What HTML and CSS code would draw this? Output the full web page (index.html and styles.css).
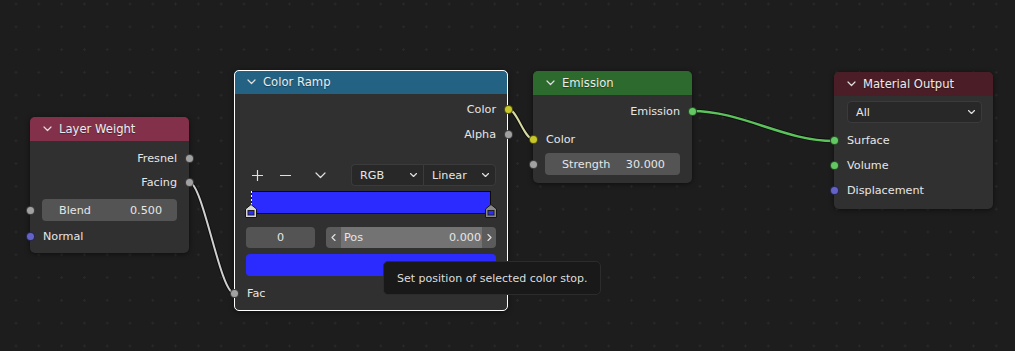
FILE: index.html
```html
<!DOCTYPE html>
<html>
<head>
<meta charset="utf-8">
<link rel="stylesheet" href="styles.css">
</head>
<body>
<div class="canvas">
  <svg class="wires" width="1015" height="351" viewBox="0 0 1015 351">
    <g fill="none" stroke-linecap="round">
      <path class="wire-shadow" d="M189,182 C203,182 220,293 234,293"/>
      <path class="wire-grey" d="M189,182 C203,182 220,293 234,293"/>
      <path class="wire-shadow" d="M508,109 C517,109 524,139 533,139"/>
      <path class="wire-yellow" d="M508,109 C517,109 524,139 533,139"/>
      <path class="wire-shadow" d="M692,111 C742,111 784,141 834,141"/>
      <path class="wire-green" d="M692,111 C742,111 784,141 834,141"/>
    </g>
  </svg>

  <!-- Layer Weight -->
  <div class="node node-lw">
    <div class="node-head head-input">
      <svg class="chev" width="9" height="6" viewBox="0 0 9 6"><polyline points="1,1 4.5,4.5 8,1"/></svg>
      <span>Layer Weight</span>
    </div>
    <div class="node-body pad-lw">
      <div class="row out"><span>Fresnel</span><i class="sock grey"></i></div>
      <div class="row out"><span>Facing</span><i class="sock grey"></i></div>
      <div class="row in field-row gap-4"><i class="sock grey"></i><div class="field"><span>Blend</span><span>0.500</span></div></div>
      <div class="row in gap-2"><i class="sock blue"></i><span>Normal</span></div>
    </div>
  </div>

  <!-- Color Ramp -->
  <div class="node node-cr selected">
    <div class="node-head head-conv">
      <svg class="chev" width="9" height="6" viewBox="0 0 9 6"><polyline points="1,1 4.5,4.5 8,1"/></svg>
      <span>Color Ramp</span>
    </div>
    <div class="node-body pad-cr">
      <div class="row out tall"><span>Color</span><i class="sock yellow"></i></div>
      <div class="row out tall"><span>Alpha</span><i class="sock grey"></i></div>
      <div class="ramp-tools">
        <span class="tool-btn"><svg width="11" height="11" viewBox="0 0 11 11"><path d="M5.5 0.5V10.5M0.5 5.5H10.5"/></svg></span>
        <span class="tool-btn tool-minus"><svg width="11" height="11" viewBox="0 0 11 11"><path d="M0.5 5.5H10.5"/></svg></span>
        <span class="tool-btn tool-chev"><svg width="11" height="7" viewBox="0 0 11 7"><polyline points="1,1 5.5,5.5 10,1"/></svg></span>
        <div class="menu-pair">
          <div class="menu menu-left"><span>RGB</span><svg class="mchev" width="7" height="4" viewBox="0 0 7 4"><polyline points="0.5,0.5 3.5,3.5 6.5,0.5"/></svg></div>
          <div class="menu menu-right"><span>Linear</span><svg class="mchev" width="7" height="4" viewBox="0 0 7 4"><polyline points="0.5,0.5 3.5,3.5 6.5,0.5"/></svg></div>
        </div>
      </div>
      <div class="ramp-wrap">
        <div class="ramp">
          <span class="ramp-active"></span>
          <svg class="stop stop-left" width="12" height="14" viewBox="0 0 12 14"><polygon points="6,0.5 11.5,5 11.5,13.5 0.5,13.5 0.5,5"/><rect x="3" y="6.5" width="6" height="4.5"/></svg>
          <svg class="stop stop-right" width="12" height="14" viewBox="0 0 12 14"><polygon points="6,0.5 11.5,5 11.5,13.5 0.5,13.5 0.5,5"/><rect x="3" y="6.5" width="6" height="4.5"/></svg>
        </div>
      </div>
      <div class="ramp-fields">
        <div class="field field-index">0</div>
        <div class="field field-pos">
          <span class="arrow"><svg width="5" height="7" viewBox="0 0 5 7"><polyline points="4,0.5 1,3.5 4,6.5"/></svg></span>
          <span class="pos-inner"><span>Pos</span><span>0.000</span></span>
          <span class="arrow"><svg width="5" height="7" viewBox="0 0 5 7"><polyline points="1,0.5 4,3.5 1,6.5"/></svg></span>
        </div>
      </div>
      <div class="swatch"></div>
      <div class="row in fac-row"><i class="sock grey"></i><span>Fac</span></div>
    </div>
  </div>

  <!-- Emission -->
  <div class="node node-em">
    <div class="node-head head-shader">
      <svg class="chev" width="9" height="6" viewBox="0 0 9 6"><polyline points="1,1 4.5,4.5 8,1"/></svg>
      <span>Emission</span>
    </div>
    <div class="node-body pad-em">
      <div class="row out"><span>Emission</span><i class="sock green"></i></div>
      <div class="row in gap-4"><i class="sock yellow"></i><span>Color</span></div>
      <div class="row in field-row gap-1"><i class="sock grey"></i><div class="field"><span>Strength</span><span>30.000</span></div></div>
    </div>
  </div>

  <!-- Material Output -->
  <div class="node node-mo">
    <div class="node-head head-output">
      <svg class="chev" width="9" height="6" viewBox="0 0 9 6"><polyline points="1,1 4.5,4.5 8,1"/></svg>
      <span>Material Output</span>
    </div>
    <div class="node-body pad-mo">
      <div class="row menu-row"><div class="menu menu-full"><span>All</span><svg class="mchev" width="7" height="4" viewBox="0 0 7 4"><polyline points="0.5,0.5 3.5,3.5 6.5,0.5"/></svg></div></div>
      <div class="row in tall gap-4"><i class="sock green"></i><span>Surface</span></div>
      <div class="row in tall"><i class="sock green"></i><span>Volume</span></div>
      <div class="row in tall"><i class="sock blue"></i><span>Displacement</span></div>
    </div>
  </div>

  <div class="tooltip">Set position of selected color stop.</div>
</div>
</body>
</html>
```

FILE: styles.css
```css
* { box-sizing: border-box; }

html, body {
  margin: 0;
  padding: 0;
  background: #1d1d1d;
}

.canvas {
  position: relative;
  width: 1015px;
  height: 351px;
  overflow: hidden;
  background-color: #1d1d1d;
  background-image: radial-gradient(circle at center, #292929 0, #292929 1px, rgba(41,41,41,0) 1.4px);
  background-size: 22.8px 22.8px;
  background-position: 4.6px 15.4px;
  font-family: "DejaVu Sans", "Liberation Sans", sans-serif;
  font-size: 11.2px;
  color: #e6e6e6;
}

.wires {
  position: absolute;
  left: 0;
  top: 0;
}

.wire-shadow { stroke: rgba(0, 0, 0, 0.55); stroke-width: 4; }
.wire-grey { stroke: #cfcfcf; stroke-width: 2; }
.wire-yellow { stroke: #d8d8a2; stroke-width: 2; }
.wire-green { stroke: #5cc25c; stroke-width: 2.4; }

/* Nodes */
.node {
  position: absolute;
  background: #303030;
  border-radius: 5px;
  box-shadow: 0 1px 5px rgba(0, 0, 0, 0.5);
}

.node.selected::after {
  content: "";
  position: absolute;
  inset: 0;
  border: 1px solid #ffffff;
  border-radius: 5px;
  pointer-events: none;
  z-index: 1;
}

.node-lw { left: 30px; top: 117px; width: 159px; height: 136px; }
.node-cr { left: 234px; top: 70px; width: 274px; height: 241px; }
.node-em { left: 533px; top: 71px; width: 159px; height: 112px; }
.node-mo { left: 834px; top: 72px; width: 159px; height: 137px; }

.node-head {
  height: 24px;
  display: flex;
  align-items: center;
  gap: 7px;
  padding-left: 13px;
  border-radius: 5px 5px 0 0;
  color: #ececec;
  font-size: 11.6px;
  text-shadow: 0 1px 1px rgba(0, 0, 0, 0.35);
}

.head-input { background: #83314a; }
.head-conv { background: #246283; }
.head-shader { background: #2c6a2d; }
.head-output { background: #4a1d27; }

.chev polyline,
.mchev polyline,
.tool-btn path,
.tool-btn polyline,
.arrow polyline {
  fill: none;
  stroke: #e0e0e0;
  stroke-width: 1.2;
  stroke-linecap: round;
  stroke-linejoin: round;
}

.node-body { display: flex; flex-direction: column; }
.pad-lw { padding-top: 5px; }
.pad-cr { padding: 3px 12px 0; }
.pad-em { padding-top: 4px; }
.pad-mo { padding-top: 4px; }

.row {
  position: relative;
  height: 24px;
  display: flex;
  align-items: center;
  padding: 0 12px 0 13px;
  flex: none;
}

.pad-cr .row { margin-left: -12px; margin-right: -12px; }

.row.tall { height: 25px; }
.row.out { justify-content: flex-end; }
.row.field-row { padding-left: 12px; }
.gap-1 { margin-top: 1px; }
.gap-2 { margin-top: 2px; }
.gap-4 { margin-top: 4px; }

.sock {
  position: absolute;
  top: 50%;
  width: 9px;
  height: 9px;
  margin-top: -4.5px;
  border-radius: 50%;
  border: 1px solid rgba(0, 0, 0, 0.6);
  z-index: 2;
}

.row.out .sock { right: -4.5px; }
.row.in .sock { left: -4.5px; }

.sock.grey { background: #a1a1a1; }
.sock.yellow { background: #c7c729; }
.sock.green { background: #63c763; }
.sock.blue { background: #6363c7; }

.field {
  flex: 1;
  height: 22px;
  display: flex;
  align-items: center;
  justify-content: space-between;
  padding: 0 15px 0 17px;
  background: #545454;
  border-radius: 4px;
}

/* Menus */
.menu {
  height: 22px;
  display: flex;
  align-items: center;
  justify-content: space-between;
  padding: 0 6px 0 8px;
  background: #282828;
  border: 1px solid #3b3b3b;
  border-radius: 4px;
}

.menu-row { padding-right: 11px; }
.menu-row .menu { flex: 1; height: 22px; }

.menu-pair { display: flex; margin-left: auto; width: 145px; }
.menu-left { width: 72px; border-radius: 4px 0 0 4px; border-right: none; }
.menu-right { flex: 1; border-radius: 0 4px 4px 0; border-left: 1px solid #3b3b3b; }

/* Color ramp */
.ramp-tools {
  display: flex;
  align-items: center;
  height: 22px;
  margin-top: 17px;
}

.tool-btn {
  width: 22px;
  height: 22px;
  display: flex;
  align-items: center;
  justify-content: center;
}

.tool-minus { margin-left: 6px; }
.tool-chev { margin-left: 13px; }

.ramp-wrap {
  margin-top: 5px;
  height: 26px;
  padding: 0 5px;
}

.ramp {
  position: relative;
  height: 23px;
  background: #2b2bff;
  border: 1px solid #0a0a0a;
}

.ramp-active {
  position: absolute;
  left: -1px;
  top: -1px;
  width: 1px;
  height: 14px;
  background: repeating-linear-gradient(to bottom, #ffffff 0, #ffffff 2px, #1a1a1a 2px, #1a1a1a 4px);
}

.stop {
  position: absolute;
  top: 12px;
}

.stop-left { left: -7px; }
.stop-right { right: -7px; }

.stop polygon { stroke: #161616; stroke-width: 1; }
.stop rect { fill: #2b2bff; stroke: #1e1e1e; stroke-width: 1; }
.stop-left polygon { fill: #d8d8d8; }
.stop-right polygon { fill: #888888; }

.ramp-fields {
  display: flex;
  gap: 11px;
  height: 21px;
  margin-top: 10px;
}

.ramp-fields .field { height: 21px; }

.field-index {
  flex: none;
  width: 69px;
  justify-content: center;
  padding: 0;
}

.field-pos {
  padding: 0;
  background: #5b5b5b;
  overflow: hidden;
}

.arrow {
  width: 15px;
  height: 100%;
  display: flex;
  align-items: center;
  justify-content: center;
  flex: none;
}

.arrow:last-child { width: 14px; }

.pos-inner {
  flex: 1;
  height: 100%;
  display: flex;
  align-items: center;
  justify-content: space-between;
  padding: 0 1px 0 3px;
  background: #737373;
}

.swatch {
  margin-top: 6px;
  height: 22px;
  background: #2b2bff;
  border-radius: 4px;
}

.fac-row { margin-top: 5px; }

/* Tooltip */
.tooltip {
  position: absolute;
  left: 383px;
  top: 261px;
  width: 218px;
  height: 34px;
  display: flex;
  align-items: center;
  padding-left: 13px;
  background: #191919;
  border: 1px solid #2c2c2c;
  border-radius: 5px;
  color: #dddddd;
  font-size: 11px;
  z-index: 5;
}
```
